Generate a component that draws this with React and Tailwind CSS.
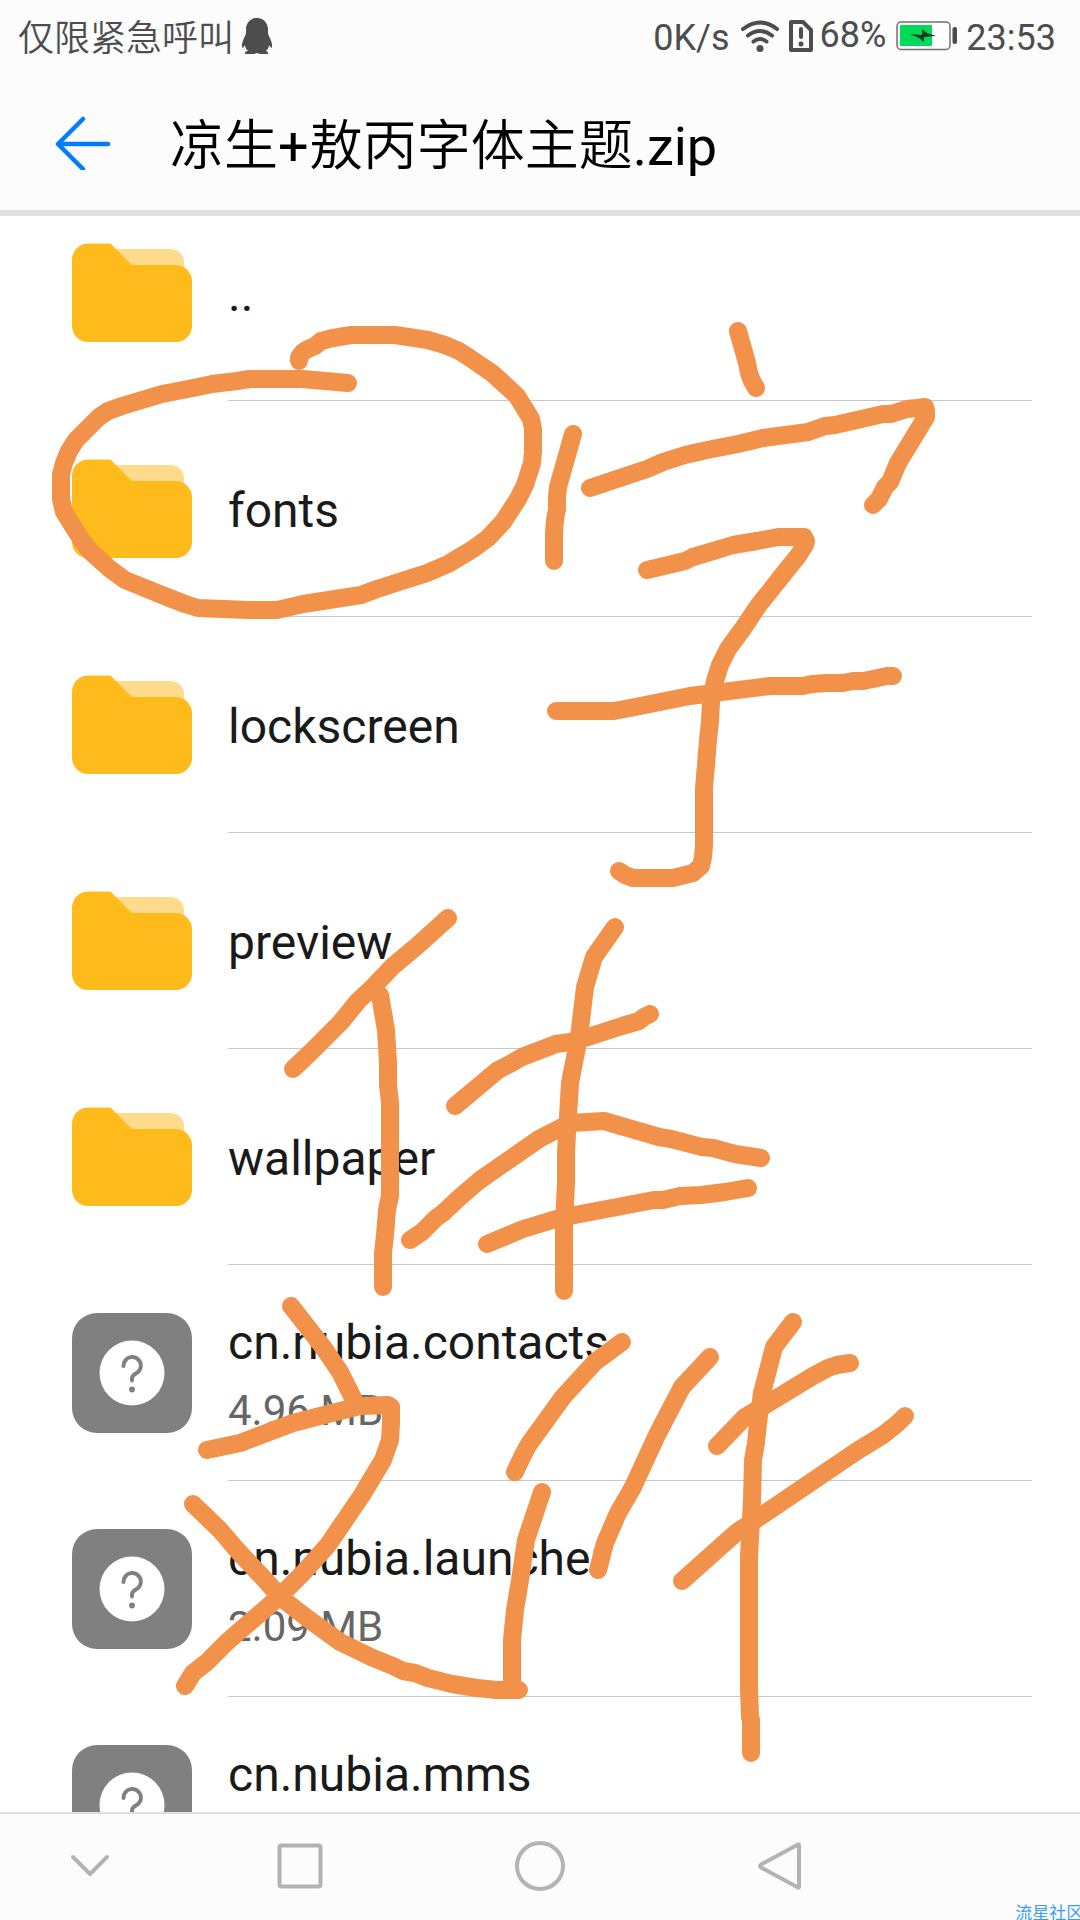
const files = [
  { name: '..', type: 'folder' },
  { name: 'fonts', type: 'folder' },
  { name: 'lockscreen', type: 'folder' },
  { name: 'preview', type: 'folder' },
  { name: 'wallpaper', type: 'folder' },
  { name: 'cn.nubia.contacts', type: 'file', size: '4.96 MB' },
  { name: 'cn.nubia.launcher', type: 'file', size: '2.09 MB' },
  { name: 'cn.nubia.mms', type: 'file' },
]

// freehand marker strokes, in screen coordinates
const markerStrokes = [
  // circle round the fonts folder
  '299,361 299,357 303,352 308,349 315,346 321,341 333,338 351,335 395,335 428,340 445,345 459,351 470,358 480,365 492,373 503,383 517,396 525,409 531,419 533,429 533,451 532,463 525,485 518,499 503,522 488,538 473,549 448,564 427,573 377,589 361,595 303,604 277,610 248,610 198,608 185,604 167,597 125,580 110,569 90,551 81,539 64,512 61,499 61,474 64,463 69,451 76,440 99,417 108,411 122,406 162,394 193,388 212,384 237,381 249,379 302,379 348,383',
  // 字
  '738,331 747,363 749,373 752,381 756,388',
  '573,434 558,487 557,497 557,509 555,520 554,533 554,561',
  '590,488 647,469 663,462 685,455 707,450 738,444 763,438 808,432 825,426 835,425 857,420 883,414 891,414 907,409 917,408 925,407 926,411 926,417 898,463 890,482 885,487 879,499 873,505',
  '647,570 685,561 693,557 710,552 733,545 757,541 778,537 804,537 806,541 805,545 798,556 785,572 770,591 758,606 742,630 733,642 728,649 720,665 715,681 711,702 710,721 708,740 706,765 704,788 704,845 703,857 701,866 693,873 673,878 633,878 625,875 619,871',
  '556,711 614,711 630,708 690,696 770,686 803,686 812,684 827,683 843,683 853,681 863,681 873,679 887,676 893,676',
  // 体
  '448,918 417,946 393,966 374,986 358,1001 341,1022 312,1051 293,1069',
  '380,995 386,1030 388,1063 388,1085 390,1103 390,1196 387,1210 385,1235 383,1253 383,1287',
  '615,927 594,957 585,987 579,1037 570,1083 567,1133 566,1153 566,1183 564,1225 564,1291',
  '455,1106 498,1070 510,1064 522,1057 556,1044 570,1042 591,1036 622,1026 639,1021 644,1017 650,1014',
  '410,1240 422,1232 436,1218 443,1213 460,1197 480,1180 539,1139 570,1123 604,1121 659,1137 671,1139 702,1147 713,1148 735,1154 761,1158',
  '487,1244 523,1229 556,1219 575,1215 654,1200 663,1200 680,1196 701,1195 725,1192 748,1188',
  // 文
  '291,1306 323,1347 340,1372 353,1398 355,1405',
  '207,1450 240,1443 293,1423 320,1416 360,1406 388,1405 391,1407 391,1423 390,1440 383,1460 362,1495 328,1545 303,1573 279,1597 243,1628 227,1642 207,1662 193,1673 185,1686',
  '193,1504 220,1530 237,1550 267,1582 280,1597 307,1618 340,1642 373,1658 393,1666 403,1671 415,1673 428,1678 452,1684 477,1688 497,1690 519,1690',
  // 件
  '542,1492 526,1540 520,1580 515,1610 512,1640 512,1688',
  '622,1342 595,1362 563,1397 529,1444 523,1455 515,1472',
  '710,1357 682,1387 657,1435 633,1487 618,1513 605,1543 598,1570',
  '793,1322 774,1347 762,1393 758,1423 756,1443 753,1460 752,1500 749,1557 749,1688 750,1717 751,1720 751,1753',
  '717,1446 745,1417 767,1404 813,1376 828,1368 837,1365 850,1363',
  '682,1581 737,1532 770,1510 857,1451 883,1435 898,1423 905,1416',
]

function PenguinIcon() {
  return (
    <svg viewBox="0 0 30 36" className="h-9 w-[30px] fill-[#4d4d4d]" aria-hidden="true">
      <path d="M15 0C8 0 4 5 4 12v3c0 2-3 6-4 11 0 2 0 4 1 4l2-3c0 2 1 4 3 6-2 0-3 1-3 2v1h9l3-1 3 1h8v-1c0-1-1-2-2-2 2-2 3-4 3-6l2 3c1 0 1-2 1-4-1-5-4-9-4-11v-3C26 5 22 0 15 0z" />
    </svg>
  )
}

function WifiIcon() {
  return (
    <svg viewBox="0 0 40 34" className="h-[34px] w-10" fill="none" stroke="#4d4d4d" strokeWidth="4" strokeLinecap="round" aria-hidden="true">
      <path d="M3 10Q20 -3 37 10M8 16.500Q20 7.500 32 16.500M13.500 22.500Q20 17.500 26.500 22.500" />
      <circle cx="20" cy="29.500" r="3.500" fill="#4d4d4d" stroke="none" />
    </svg>
  )
}

function SimAlertIcon() {
  return (
    <svg viewBox="0 0 26 34" className="h-[34px] w-[26px]" fill="none" stroke="#4d4d4d" strokeWidth="4" strokeLinejoin="round" aria-hidden="true">
      <path d="M3 3h12l8 8v20H3z" />
      <path d="M13 10v8" strokeLinecap="round" />
      <circle cx="13" cy="25" r="2.500" fill="#4d4d4d" stroke="none" />
    </svg>
  )
}

function BatteryIcon() {
  return (
    <svg viewBox="0 0 62 30" className="h-[30px] w-[62px]" aria-hidden="true">
      <rect x="1" y="1" width="53" height="27.500" rx="4" fill="#fff" stroke="#707070" strokeWidth="1.500" />
      <rect x="4" y="4" width="32" height="21" rx="1" fill="#00d95a" />
      <path d="M14 13l12 1V8l5 4 9 3-12 1v5l-5-4z" fill="#06421f" />
      <rect x="56.500" y="6" width="4.500" height="17" rx="2" fill="#4d4d4d" />
    </svg>
  )
}

function StatusBar() {
  return (
    <div className="flex h-[72px] items-center justify-between pl-[18px] pr-6 text-[36px] leading-none text-[#4d4d4d]">
      <div className="flex items-center gap-2">
        <span className="pt-1.5 font-[350]">仅限紧急呼叫</span>
        <PenguinIcon />
      </div>
      <div className="flex items-center">
        <span className="mr-2.5 pt-1">0K/s</span>
        <WifiIcon />
        <span className="ml-2 mr-1.5">
          <SimAlertIcon />
        </span>
        <span className="mr-2.5 pb-0.5">68%</span>
        <BatteryIcon />
        <span className="ml-2 pt-1">23:53</span>
      </div>
    </div>
  )
}

function FolderIcon() {
  return (
    <svg viewBox="0 0 120 120" className="size-[120px] shrink-0" aria-hidden="true">
      <path d="M40 16h59a13 13 0 0 1 13 13v20H60z" fill="#ffdb8d" />
      <path d="M16 10.500h22.500L60 32h44a16 16 0 0 1 16 16v45a16 16 0 0 1-16 16H16a16 16 0 0 1-16-16V26.500a16 16 0 0 1 16-16z" fill="#ffbb1c" />
    </svg>
  )
}

function UnknownFileIcon() {
  return (
    <svg viewBox="0 0 120 120" className="size-[120px] shrink-0" aria-hidden="true">
      <rect width="120" height="120" rx="25" fill="#808080" />
      <circle cx="60" cy="60" r="32.500" fill="#fff" />
      <path d="M51.500 53a8.700 8.700 0 1 1 12.500 7.500c-2.500 1.200-4 2.500-4 5v2" fill="none" stroke="#808080" strokeWidth="4" strokeLinecap="round" />
      <circle cx="60" cy="76.500" r="3" fill="#808080" />
    </svg>
  )
}

function FileRow({ file }) {
  const isFolder = file.type === 'folder'

  return (
    <li>
      <button type="button" className="flex w-full gap-9 pl-[72px] pr-12 text-left">
        <span className="pt-12">{isFolder ? <FolderIcon /> : <UnknownFileIcon />}</span>
        <span
          className={`flex h-[216px] min-w-0 flex-1 flex-col justify-center gap-3 border-b border-[#c8c8c8] ${isFolder ? 'pt-1' : 'pt-2'}`}
        >
          <span className="truncate text-[48px] leading-[56px] text-[#1a1a1a]">{file.name}</span>
          {!isFolder && <span className="text-[42px] leading-[56px] text-[#666666]">{file.size || '\u00a0'}</span>}
        </span>
      </button>
    </li>
  )
}

function NavBar() {
  return (
    <nav className="grid h-[108px] shrink-0 grid-cols-[3fr_4fr_4fr_4fr_3fr] border-t-2 border-[#dfdfdf] bg-[#fcfcfc] pb-0.5">
      <button type="button" aria-label="收起" className="flex items-center justify-center">
        <svg viewBox="0 0 52 52" className="size-[52px]" fill="none" stroke="#b3b3b3" strokeWidth="4" strokeLinecap="round" strokeLinejoin="round">
          <path d="M9 17l17 17 17-17" />
        </svg>
      </button>
      <button type="button" aria-label="最近任务" className="flex items-center justify-center">
        <svg viewBox="0 0 52 52" className="size-[52px]" fill="none" stroke="#b3b3b3" strokeWidth="4">
          <rect x="5.500" y="5.500" width="41" height="41" rx="2" />
        </svg>
      </button>
      <button type="button" aria-label="主页" className="flex items-center justify-center">
        <svg viewBox="0 0 52 52" className="size-[52px]" fill="none" stroke="#b3b3b3" strokeWidth="4">
          <circle cx="26" cy="26" r="23" />
        </svg>
      </button>
      <button type="button" aria-label="返回" className="flex items-center justify-center">
        <svg viewBox="0 0 52 52" className="size-[52px]" fill="none" stroke="#b3b3b3" strokeWidth="4" strokeLinejoin="round">
          <path d="M44 4.500L7 24.500q-2 1.500 0 3L44 47.500q1 .5 1-1v-41q0-1.500-1-1z" />
        </svg>
      </button>
    </nav>
  )
}

function MarkerOverlay() {
  return (
    <svg viewBox="0 0 1080 1920" className="pointer-events-none absolute inset-0 w-full" fill="none" stroke="#f2914a" strokeWidth="18" strokeLinecap="round" strokeLinejoin="round" aria-hidden="true">
      {markerStrokes.map((points) => (
        <polyline key={points} points={points} />
      ))}
    </svg>
  )
}

export default function App() {
  return (
    <div className="relative flex h-screen flex-col overflow-hidden bg-white font-[Roboto,'Noto_Sans_CJK_SC',sans-serif]">
      <header className="shrink-0 border-b-6 border-[#e0e0e0] bg-[#fcfcfc]">
        <StatusBar />
        <div className="flex h-[138px] items-center gap-[58px] pl-[54px] pr-12">
          <button type="button" aria-label="返回上一级">
            <svg viewBox="0 0 58 58" className="size-[58px]" fill="none" stroke="#007dff" strokeWidth="4.500" strokeLinecap="round" strokeLinejoin="round">
              <path d="M54 32H4M29 7L4 32l25 25" />
            </svg>
          </button>
          <h1 className="truncate pt-3 text-[54px] leading-[72px] text-black">
            <span className="font-[350]">凉生</span>+<span className="font-[350]">敖丙字体主题</span>.zip
          </h1>
        </div>
      </header>

      <main className="min-h-0 flex-1 overflow-hidden">
        {/* list is scrolled slightly under the title bar */}
        <ul className="-mt-[31px]">
          {files.map((file) => (
            <FileRow key={file.name} file={file} />
          ))}
        </ul>
      </main>

      <NavBar />
      <MarkerOverlay />
      <span className="absolute bottom-0 left-[94%] whitespace-nowrap text-[17px] leading-[14px] text-[#3a9cff]">流星社区</span>
    </div>
  )
}
